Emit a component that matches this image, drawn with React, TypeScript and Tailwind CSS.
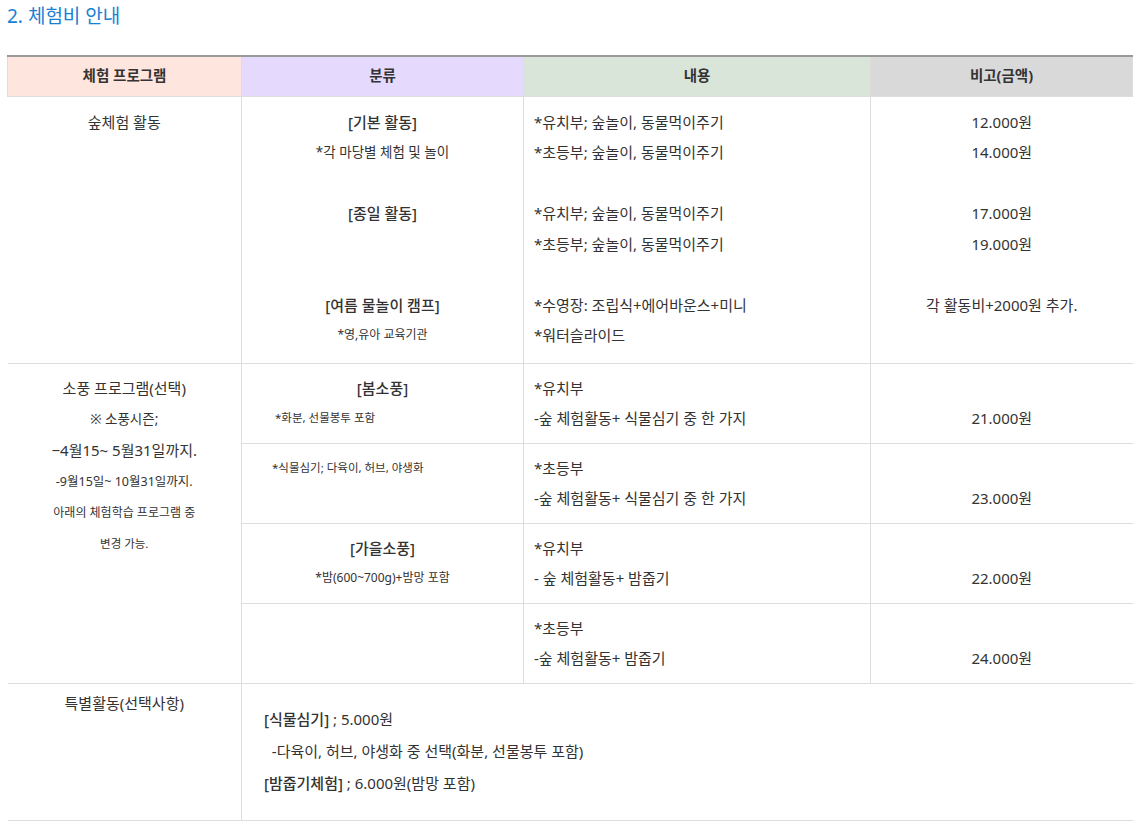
import React from "react";

const font = { fontFamily: '"Noto Sans", "Noto Sans CJK KR", sans-serif' };

type Line = { text?: React.ReactNode; size?: string };

const Lines = ({ lines, h = "h-[30.5px] leading-[30.5px]" }: { lines: Line[]; h?: string }) => (
  <>
    {lines.map((l, i) => (
      <div key={i} className={`${h} whitespace-nowrap ${l.size ?? "text-[15px]"}`}>
        {l.text ?? "\u00a0"}
      </div>
    ))}
  </>
);

const td = "border border-[#dddddd] align-top p-0";

const App = () => {
  return (
    <div className="bg-white w-[1142px] min-h-[824px] text-[#333333]" style={font}>
      <h2 className="text-[19px] leading-none text-[#1a80d4] font-normal pl-[7px] pt-[7px]">
        2. 체험비 안내
      </h2>
      <div className="pl-[7px] pt-[29px]">
        <table className="table-fixed border-collapse w-[1125px] border-t-[2px] border-t-[#999999]">
          <colgroup>
            <col className="w-[234px]" />
            <col className="w-[282px]" />
            <col className="w-[347px]" />
            <col className="w-[262px]" />
          </colgroup>
          <thead>
            <tr className="h-[40px] text-[14.5px] font-bold">
              <th className="border border-[#dddddd] border-t-0 bg-[#fee5dd]">체험 프로그램</th>
              <th className="border border-[#dddddd] border-t-0 bg-[#e5dafd]">분류</th>
              <th className="border border-[#dddddd] border-t-0 bg-[#dae5d9]">내용</th>
              <th className="border border-[#dddddd] border-t-0 bg-[#d9d9d9]">비고(금액)</th>
            </tr>
          </thead>
          <tbody>
            <tr>
              <td className={`${td} border-l-0 text-center pt-[10px] pb-[12px]`}>
                <Lines lines={[{ text: "숲체험 활동" }]} />
              </td>
              <td className={`${td} text-center pt-[10px] pb-[12px]`}>
                <Lines
                  lines={[
                    { text: <span className="font-medium">[기본 활동]</span> },
                    { text: "*각 마당별 체험 및 놀이", size: "text-[13.5px]" },
                    {},
                    { text: <span className="font-medium">[종일 활동]</span> },
                    {},
                    {},
                    { text: <span className="font-medium">[여름 물놀이 캠프]</span> },
                    { text: "*영,유아 교육기관", size: "text-[12px]" },
                  ]}
                />
              </td>
              <td className={`${td} pl-[10px] pt-[10px] pb-[12px]`}>
                <Lines
                  lines={[
                    { text: "*유치부; 숲놀이, 동물먹이주기" },
                    { text: "*초등부; 숲놀이, 동물먹이주기" },
                    {},
                    { text: "*유치부; 숲놀이, 동물먹이주기" },
                    { text: "*초등부; 숲놀이, 동물먹이주기" },
                    {},
                    { text: "*수영장: 조립식+에어바운스+미니" },
                    { text: "*워터슬라이드" },
                  ]}
                />
              </td>
              <td className={`${td} border-r-0 text-center pt-[10px] pb-[12px]`}>
                <Lines
                  lines={[
                    { text: "12.000원" },
                    { text: "14.000원" },
                    {},
                    { text: "17.000원" },
                    { text: "19.000원" },
                    {},
                    { text: "각 활동비+2000원 추가." },
                    {},
                  ]}
                />
              </td>
            </tr>

            <tr>
              <td rowSpan={4} className={`${td} border-l-0 text-center pt-[9px]`}>
                <Lines
                  h="h-[31px] leading-[31px]"
                  lines={[
                    { text: "소풍 프로그램(선택)" },
                    { text: "※ 소풍시즌;", size: "text-[13.5px]" },
                    { text: "−4월15~ 5월31일까지." },
                    { text: "-9월15일~ 10월31일까지.", size: "text-[12.5px]" },
                    { text: "아래의 체험학습 프로그램 중", size: "text-[12px]" },
                    { text: "변경 가능.", size: "text-[11.5px]" },
                  ]}
                />
              </td>
              <td className={`${td} py-[9px]`}>
                <div className="text-center h-[30.5px] leading-[30.5px] text-[15px] font-medium">[봄소풍]</div>
                <div className="pl-[33px] h-[30.5px] leading-[30.5px] text-[11.5px]">*화분, 선물봉투 포함</div>
              </td>
              <td className={`${td} pl-[10px] py-[9px]`}>
                <Lines lines={[{ text: "*유치부" }, { text: "-숲 체험활동+ 식물심기 중 한 가지" }]} />
              </td>
              <td className={`${td} border-r-0 text-center py-[9px]`}>
                <Lines lines={[{}, { text: "21.000원" }]} />
              </td>
            </tr>
            <tr>
              <td className={`${td} py-[9px]`}>
                <div className="pl-[30px] h-[30.5px] leading-[30.5px] text-[11.5px]">*식물심기; 다육이, 허브, 야생화</div>
                <div className="h-[30.5px]" />
              </td>
              <td className={`${td} pl-[10px] py-[9px]`}>
                <Lines lines={[{ text: "*초등부" }, { text: "-숲 체험활동+ 식물심기 중 한 가지" }]} />
              </td>
              <td className={`${td} border-r-0 text-center py-[9px]`}>
                <Lines lines={[{}, { text: "23.000원" }]} />
              </td>
            </tr>
            <tr>
              <td className={`${td} text-center py-[9px]`}>
                <Lines
                  lines={[
                    { text: <span className="font-medium">[가을소풍]</span> },
                    { text: "*밤(600~700g)+밤망 포함", size: "text-[12px]" },
                  ]}
                />
              </td>
              <td className={`${td} pl-[10px] py-[9px]`}>
                <Lines lines={[{ text: "*유치부" }, { text: "- 숲 체험활동+ 밤줍기" }]} />
              </td>
              <td className={`${td} border-r-0 text-center py-[9px]`}>
                <Lines lines={[{}, { text: "22.000원" }]} />
              </td>
            </tr>
            <tr>
              <td className={`${td} py-[9px]`}>
                <Lines lines={[{}, {}]} />
              </td>
              <td className={`${td} pl-[10px] py-[9px]`}>
                <Lines lines={[{ text: "*초등부" }, { text: "-숲 체험활동+ 밤줍기" }]} />
              </td>
              <td className={`${td} border-r-0 text-center py-[9px]`}>
                <Lines lines={[{}, { text: "24.000원" }]} />
              </td>
            </tr>

            <tr className="h-[137px]">
              <td className={`${td} border-l-0 text-center pt-[4px]`}>
                <Lines lines={[{ text: "특별활동(선택사항)" }]} />
              </td>
              <td colSpan={3} className={`${td} border-r-0 pl-[22px] pt-[19px]`}>
                <Lines
                  h="h-[32px] leading-[32px]"
                  lines={[
                    { text: <><span className="font-medium">[식물심기]</span> ; 5.000원</> },
                    { text: "\u00a0\u00a0-다육이, 허브, 야생화 중 선택(화분, 선물봉투 포함)" },
                    { text: <><span className="font-medium">[밤줍기체험]</span> ; 6.000원(밤망 포함)</> },
                  ]}
                />
              </td>
            </tr>
          </tbody>
        </table>
      </div>
    </div>
  );
};

export default App;
